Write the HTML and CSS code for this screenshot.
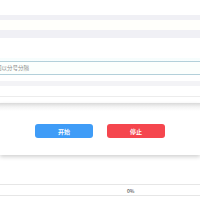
FILE: index.html
```html
<!DOCTYPE html>
<html>
<head>
  <title>关键词任务</title>
  <link rel="stylesheet" href="styles.css">
</head>
<body>
  <div class="page">
    <div class="band gray"></div>
    <div class="band cream"></div>
    <div class="band gray short"></div>

    <div class="field-row">
      <input class="keywords" type="text" placeholder="词以分号分隔">
    </div>

    <div class="band light"></div>
    <div class="divider-line"></div>

    <div class="action-card">
      <button class="btn btn-start">开始</button>
      <button class="btn btn-stop">停止</button>
    </div>

    <div class="progress-row">
      <span class="percent">0%</span>
    </div>
  </div>
</body>
</html>
```

FILE: styles.css
```css
body {
  margin: 0;
  padding: 0;
  background: #fff;
  font-family: "Noto Sans CJK SC", "Liberation Sans", sans-serif;
}

.page {
  width: 200px;
  height: 200px;
  overflow: hidden;
  padding-top: 15px;
  box-sizing: border-box;
}

.band {
  height: 5px;
}

.gray {
  background-color: #f0f0f5;
}

.cream {
  height: 10px;
  background-color: #fffffb;
}

.short {
  height: 8px;
}

.field-row {
  margin-top: 20px;
  padding-top: 3px;
  background: linear-gradient(#f6fdfd, #fff);
}

.keywords {
  display: block;
  width: 100%;
  height: 14px;
  box-sizing: border-box;
  margin: 0;
  padding: 0;
  border: none;
  border-top: 1px solid #b3d0da;
  border-bottom: 1px solid #b3d0da;
  background-color: #fcfffd;
  font-family: inherit;
  font-size: 5.5px;
  text-indent: -4px;
  outline: none;
}

.keywords::placeholder {
  color: #8a8a8a;
}

.light {
  margin-top: 6px;
  background-color: #f3f3f6;
}

.divider-line {
  height: 10px;
  border-bottom: 1px solid #ececec;
}

.action-card {
  margin-top: 6px;
  height: 52px;
  display: flex;
  justify-content: center;
  align-items: center;
  gap: 14px;
  padding-top: 4px;
  box-sizing: border-box;
  background: linear-gradient(#d9d9d9, #f4f4f4 4px, #fff 8px);
  box-shadow: 0 2px 4px rgba(0, 0, 0, 0.18);
}

.btn {
  width: 58px;
  height: 14px;
  border: none;
  border-radius: 3px;
  color: #fff;
  font-family: inherit;
  font-size: 6px;
  font-weight: bold;
  padding: 0;
  cursor: pointer;
}

.btn-start {
  background-color: #3f9cf7;
}

.btn-stop {
  background-color: #f5464e;
}

.progress-row {
  margin-top: 29px;
  height: 10px;
  border-top: 1px solid #e6e6e6;
  border-bottom: 1px solid #e6e6e6;
  display: flex;
  align-items: center;
  padding-left: 127px;
}

.percent {
  font-size: 5px;
  color: #222;
}
```
